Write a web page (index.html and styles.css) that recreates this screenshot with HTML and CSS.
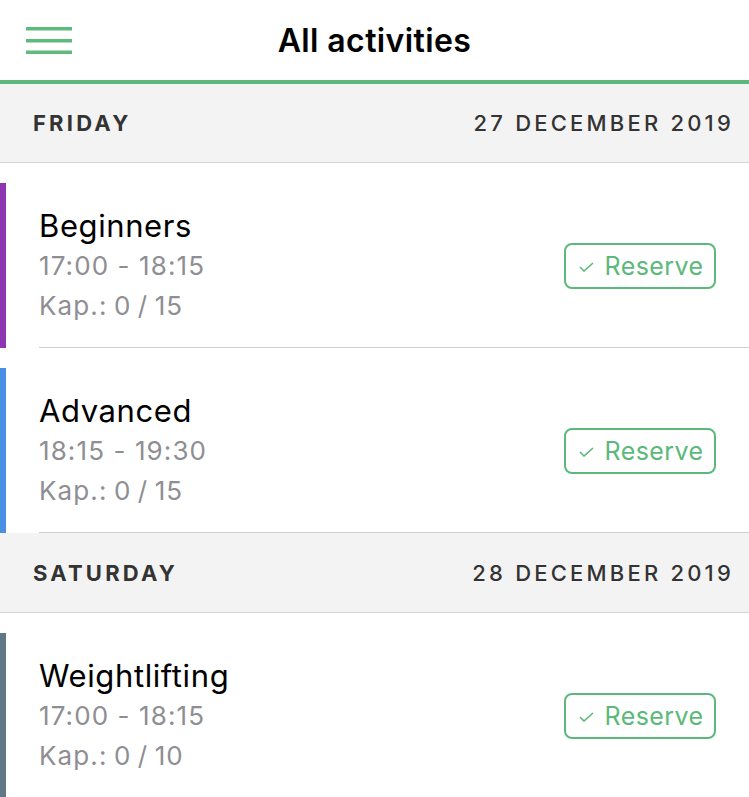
FILE: index.html
```html
<!DOCTYPE html>
<html>
<head>
<meta charset="utf-8">
<link rel="stylesheet" href="styles.css">
</head>
<body>
<header class="topbar">
  <div class="menu">
    <svg width="46" height="28" viewBox="0 0 46 28"><rect x="0" y="0" width="46" height="3.5" fill="#5fba7d"/><rect x="0" y="12" width="46" height="3.5" fill="#5fba7d"/><rect x="0" y="23.5" width="46" height="3.5" fill="#5fba7d"/></svg>
  </div>
  <h1 class="title">All activities</h1>
  <div></div>
</header>

<section>
  <div class="day-head"><span class="day">FRIDAY</span><span class="date">27 DECEMBER 2019</span></div>
  <div class="item">
    <div class="bar bar-purple"></div>
    <div class="content">
      <div class="info">
        <div class="name">Beginners</div>
        <div class="meta">17:00 - 18:15</div>
        <div class="meta cap">Kap.: 0 / 15</div>
      </div>
      <button class="reserve"><svg class="check" width="15" height="10" viewBox="0 0 15 10"><path d="M1 5 L5 9 L14 1" fill="none" stroke="#5cb97b" stroke-width="1.6"/></svg>Reserve</button>
    </div>
  </div>
  <div class="item">
    <div class="bar bar-blue"></div>
    <div class="content">
      <div class="info">
        <div class="name">Advanced</div>
        <div class="meta">18:15 - 19:30</div>
        <div class="meta cap">Kap.: 0 / 15</div>
      </div>
      <button class="reserve"><svg class="check" width="15" height="10" viewBox="0 0 15 10"><path d="M1 5 L5 9 L14 1" fill="none" stroke="#5cb97b" stroke-width="1.6"/></svg>Reserve</button>
    </div>
  </div>
</section>

<section>
  <div class="day-head day-head-2"><span class="day">SATURDAY</span><span class="date">28 DECEMBER 2019</span></div>
  <div class="item">
    <div class="bar bar-slate"></div>
    <div class="content">
      <div class="info">
        <div class="name">Weightlifting</div>
        <div class="meta">17:00 - 18:15</div>
        <div class="meta cap">Kap.: 0 / 10</div>
      </div>
      <button class="reserve"><svg class="check" width="15" height="10" viewBox="0 0 15 10"><path d="M1 5 L5 9 L14 1" fill="none" stroke="#5cb97b" stroke-width="1.6"/></svg>Reserve</button>
    </div>
  </div>
</section>
</body>
</html>
```
FILE: styles.css
```css
html, body {
  margin: 0;
  padding: 0;
  background: #ffffff;
  font-family: Inter, "Noto Sans", "Liberation Sans", sans-serif;
  width: 749px;
  overflow: hidden;
}

.topbar {
  height: 80px;
  display: grid;
  grid-template-columns: 1fr auto 1fr;
  align-items: center;
  border-bottom: 4px solid #5cb77a;
}

.menu {
  padding-left: 26px;
  display: flex;
  align-items: center;
  padding-top: 2px;
}

.menu svg { display: block; }

.title {
  margin: 0;
  font-size: 32px;
  font-weight: 600;
  color: #000;
  letter-spacing: 0.4px;
}

.day-head {
  height: 78px;
  background: #f3f3f3;
  border-bottom: 1px solid #d5d5d5;
  display: flex;
  align-items: center;
  justify-content: space-between;
  padding: 0 15px 0 33px;
  color: #333;
  font-size: 22px;
  letter-spacing: 3.2px;
}

.day-head-2 { height: 79px; }

.day { font-weight: 700; }
.date { font-weight: 500; }

.item {
  display: flex;
  height: 185px;
}

.bar {
  width: 6px;
  margin-top: 20px;
  flex: none;
}

.bar-purple { background: #8e35b1; }
.bar-blue { background: #4a90e2; }
.bar-slate { background: #607785; }

.content {
  flex: 1;
  margin-left: 33px;
  border-bottom: 1px solid #cfcfcf;
  display: flex;
  align-items: center;
  justify-content: space-between;
  padding: 43px 33px 21px 0;
}

.name {
  font-size: 31px;
  line-height: 40px;
  color: #000;
  letter-spacing: 0.6px;
}

.meta {
  font-size: 26px;
  line-height: 40px;
  color: #8e8e93;
  letter-spacing: 1.1px;
}

.cap { word-spacing: -2px; }

.reserve {
  width: 152px;
  height: 46px;
  border: 2px solid #5cb97b;
  border-radius: 8px;
  background: #fff;
  color: #5cb97b;
  font-family: inherit;
  font-size: 25px;
  letter-spacing: 0.4px;
  display: flex;
  align-items: center;
  justify-content: center;
  gap: 11px;
  padding: 0 0 0 2px;
}

.check { display: block; margin-top: 1px; }
```
